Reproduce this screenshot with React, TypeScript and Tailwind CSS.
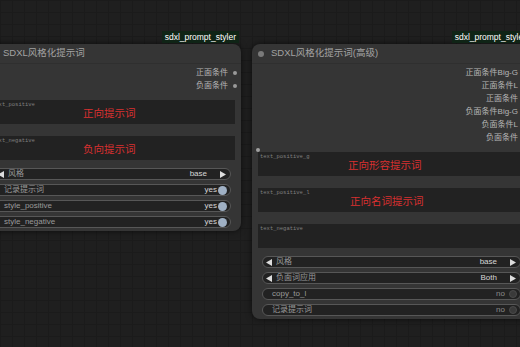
import type { ReactNode } from 'react'

type Widget =
  | { kind: 'combo'; label: string; value: string }
  | { kind: 'toggle'; label: string; on: boolean }

type Area = { name: string; text?: string; indent: number; slot?: boolean }

type NodeProps = {
  left: number
  width: number
  title: string
  dot?: boolean
  outputs: string[]
  areas: Area[]
  widgets: Widget[]
}

const fontCls = "font-['Liberation_Sans','Noto_Sans_CJK_SC',sans-serif]"

function Tri({ dir }: { dir: 'l' | 'r' }) {
  return (
    <svg width="6" height="7" viewBox="0 0 6 7" className="shrink-0">
      {dir === 'l'
        ? <polygon points="6,0 6,7 0,3.5" fill="#dddddd" />
        : <polygon points="0,0 0,7 6,3.5" fill="#dddddd" />}
    </svg>
  )
}

function WidgetRow({ w }: { w: Widget }) {
  if (w.kind === 'combo') {
    return (
      <div className="h-[12px] rounded-full border border-[#575757] bg-[#222222] flex items-center pl-[3px] pr-[4px] text-[8px] leading-none">
        <Tri dir="l" />
        <span className="ml-[4px] text-[#9a9a9a]">{w.label}</span>
        <span className="ml-auto text-[#d6d6d6]">{w.value}</span>
        <span className="ml-[13px]"><Tri dir="r" /></span>
      </div>
    )
  }
  return (
    <div className="h-[12px] rounded-full border border-[#575757] bg-[#222222] flex items-center pl-[9px] pr-[3px] text-[8px] leading-none">
      <span className="text-[#9a9a9a]">{w.label}</span>
      <span className={'ml-auto ' + (w.on ? 'text-[#d6d6d6]' : 'text-[#8a8a8a]')}>{w.on ? 'yes' : 'no'}</span>
      {w.on
        ? <span className="ml-[1px] w-[9px] h-[9px] rounded-full bg-[#9fb0c4]" />
        : <span className="ml-[4px] w-[8px] h-[8px] rounded-full bg-[#3a3a3a] border border-[#4a4a4a]" />}
    </div>
  )
}

function TextArea({ a }: { a: Area }) {
  return (
    <div className="relative h-[24px] bg-[#222222] px-[2px] pt-[2px] flex flex-col">
      {a.slot && <span className="absolute -left-[2px] -top-[4px] w-[4px] h-[4px] rounded-full bg-[#a0a0a0]" />}
      <span className="font-['Liberation_Mono',monospace] text-[5.5px] leading-[6px] text-[#808080]">{a.name}</span>
      {a.text && (
        <span className="-mt-[1px] text-[10.5px] leading-[12px] text-[#d93030]" style={{ paddingLeft: a.indent }}>{a.text}</span>
      )}
    </div>
  )
}

function Node({ left, width, title, dot, outputs, areas, widgets }: NodeProps) {
  return (
    <div className="absolute top-[44px]" style={{ left, width }}>
      <div className="absolute -top-[13px] right-[2px] h-[12px] px-[3px] bg-[#0f2416] text-white text-[8.5px] leading-[12px]">
        sdxl_prompt_styler
      </div>
      <div className="rounded-[8px] bg-[#353535] shadow-[0_0_6px_rgba(0,0,0,0.6)] pb-[3px]">
        <div className="h-[20px] flex items-center border-b border-[#2f2f2f]">
          <span className={'ml-[6px] w-[6px] h-[6px] rounded-full ' + (dot ? 'bg-[#7a7a7a]' : 'bg-transparent')} />
          <span className="ml-[7px] text-[9.5px] text-[#a3a3a3]">{title}</span>
        </div>
        <div className="pt-[2px] pr-[4px] flex flex-col items-end">
          {outputs.map(o => (
            <div key={o} className="h-[13px] flex items-center gap-[5px]">
              <span className="text-[8px] leading-none text-[#b5b5b5]">{o}</span>
              <span className="w-[4px] h-[4px] rounded-full bg-[#9a9a9a]" />
            </div>
          ))}
        </div>
        <div className="mt-[8px] mx-[6px] flex flex-col gap-[12px]">
          {areas.map(a => <TextArea key={a.name} a={a} />)}
        </div>
        <div className="mt-[8px] mx-[10px] flex flex-col gap-[4px]">
          {widgets.map(w => <WidgetRow key={w.label} w={w} />)}
        </div>
      </div>
    </div>
  )
}

function Canvas({ children }: { children: ReactNode }) {
  return (
    <div className={'relative w-[520px] h-[347px] overflow-hidden bg-[#1f1f1f] bg-[linear-gradient(#1b1b1b_1px,transparent_1px),linear-gradient(90deg,#1b1b1b_1px,transparent_1px)] bg-size-[12px_12px] ' + fontCls}>
      {children}
    </div>
  )
}

export default function App() {
  return (
    <Canvas>
      <Node
        left={-16}
        width={257}
        title="SDXL风格化提示词"
        outputs={['正面条件', '负面条件']}
        areas={[
          { name: 'text_positive', text: '正向提示词', indent: 91 },
          { name: 'text_negative', text: '负向提示词', indent: 91 },
        ]}
        widgets={[
          { kind: 'combo', label: '风格', value: 'base' },
          { kind: 'toggle', label: '记录提示词', on: true },
          { kind: 'toggle', label: 'style_positive', on: true },
          { kind: 'toggle', label: 'style_negative', on: true },
        ]}
      />
      <Node
        left={252}
        width={279}
        title="SDXL风格化提示词(高级)"
        dot
        outputs={['正面条件Big-G', '正面条件L', '正面条件', '负面条件Big-G', '负面条件L', '负面条件']}
        areas={[
          { name: 'text_positive_g', text: '正向形容提示词', indent: 88, slot: true },
          { name: 'text_positive_l', text: '正向名词提示词', indent: 90 },
          { name: 'text_negative', indent: 0 },
        ]}
        widgets={[
          { kind: 'combo', label: '风格', value: 'base' },
          { kind: 'combo', label: '负面词应用', value: 'Both' },
          { kind: 'toggle', label: 'copy_to_l', on: false },
          { kind: 'toggle', label: '记录提示词', on: false },
        ]}
      />
    </Canvas>
  )
}
